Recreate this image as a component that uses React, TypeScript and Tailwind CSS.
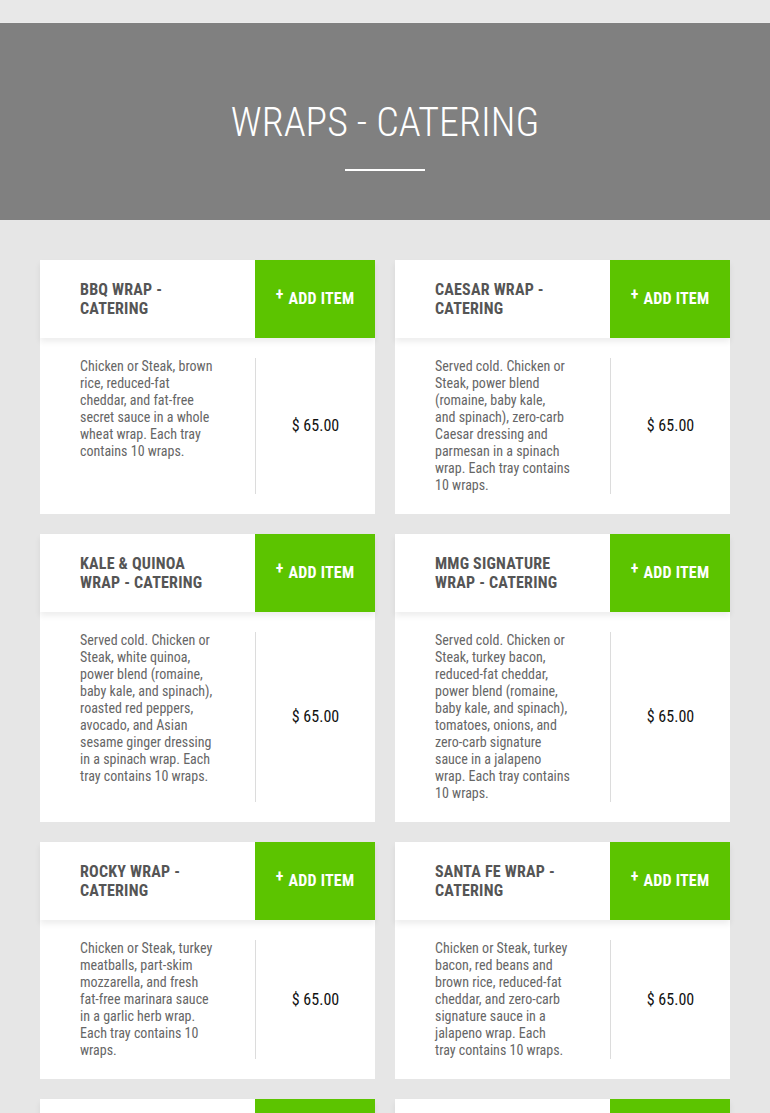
import React from "react";

type Item = { title: string; desc: string[]; price: string };

const items: Item[] = [
  {
    title: "BBQ Wrap - Catering",
    desc: [
      "Chicken or Steak, brown",
      "rice, reduced-fat",
      "cheddar, and fat-free",
      "secret sauce in a whole",
      "wheat wrap. Each tray",
      "contains 10 wraps.",
    ],
    price: "$ 65.00",
  },
  {
    title: "Caesar Wrap - Catering",
    desc: [
      "Served cold. Chicken or",
      "Steak, power blend",
      "(romaine, baby kale,",
      "and spinach), zero-carb",
      "Caesar dressing and",
      "parmesan in a spinach",
      "wrap. Each tray contains",
      "10 wraps.",
    ],
    price: "$ 65.00",
  },
  {
    title: "Kale & Quinoa Wrap - Catering",
    desc: [
      "Served cold. Chicken or",
      "Steak, white quinoa,",
      "power blend (romaine,",
      "baby kale, and spinach),",
      "roasted red peppers,",
      "avocado, and Asian",
      "sesame ginger dressing",
      "in a spinach wrap. Each",
      "tray contains 10 wraps.",
    ],
    price: "$ 65.00",
  },
  {
    title: "MMG Signature Wrap - Catering",
    desc: [
      "Served cold. Chicken or",
      "Steak, turkey bacon,",
      "reduced-fat cheddar,",
      "power blend (romaine,",
      "baby kale, and spinach),",
      "tomatoes, onions, and",
      "zero-carb signature",
      "sauce in a jalapeno",
      "wrap. Each tray contains",
      "10 wraps.",
    ],
    price: "$ 65.00",
  },
  {
    title: "Rocky Wrap - Catering",
    desc: [
      "Chicken or Steak, turkey",
      "meatballs, part-skim",
      "mozzarella, and fresh",
      "fat-free marinara sauce",
      "in a garlic herb wrap.",
      "Each tray contains 10",
      "wraps.",
    ],
    price: "$ 65.00",
  },
  {
    title: "Santa Fe Wrap - Catering",
    desc: [
      "Chicken or Steak, turkey",
      "bacon, red beans and",
      "brown rice, reduced-fat",
      "cheddar, and zero-carb",
      "signature sauce in a",
      "jalapeno wrap. Each",
      "tray contains 10 wraps.",
    ],
    price: "$ 65.00",
  },
  {
    title: "Southwest Wrap - Catering",
    desc: [
      "Chicken or Steak, black",
      "beans, brown rice,",
      "reduced-fat cheddar,",
      "and salsa in a whole",
      "wheat wrap. Each tray",
      "contains 10 wraps.",
    ],
    price: "$ 65.00",
  },
  {
    title: "Turkey Club Wrap - Catering",
    desc: [
      "Served cold. Turkey,",
      "turkey bacon, reduced-",
      "fat cheddar, tomatoes,",
      "and zero-carb signature",
      "sauce in a spinach wrap.",
      "Each tray contains 10",
      "wraps.",
    ],
    price: "$ 65.00",
  },
];

function Card({ item }: { item: Item }) {
  return (
    <div className="bg-white flex flex-col">
      <div className="flex h-[78px] relative z-10 shadow-[0_4px_6px_rgba(0,0,0,0.07)]">
        <div className="w-[215px] px-10 flex items-center font-bold text-[16px] leading-[19px] text-[#555] uppercase tracking-[0.2px]">
          {item.title}
        </div>
        <div className="w-[120px] bg-[#5cc400] flex items-center justify-center text-white font-bold text-[16px] leading-none tracking-[0.2px]">
          <span className="text-[16px] relative -top-[4px] mr-[5px]">+</span>
          ADD ITEM
        </div>
      </div>
      <div className="flex flex-1 py-5">
        <div className="w-[215px] pl-10 pr-8 text-[14px] leading-[17px] text-[#666]">
          {item.desc.map((l, i) => (
            <div key={i} className="whitespace-nowrap">
              {l}
            </div>
          ))}
        </div>
        <div className="w-[120px] border-l border-[#dcdcdc] flex items-center justify-center text-[16px] text-[#111]">
          {item.price}
        </div>
      </div>
    </div>
  );
}

export default function App() {
  return (
    <div className="min-h-screen bg-[#e6e6e6] font-['Roboto_Condensed',Roboto,sans-serif] [font-stretch:condensed]">
      <div className="h-[23px] bg-[#e8e8e8] border-b border-[#ebebeb]" />
      <div className="h-[197px] bg-[#808080] flex flex-col items-center">
        <h1 className="mt-[78px] text-white text-[40px] leading-[44px] font-light">
          WRAPS - CATERING
        </h1>
        <div className="mt-[24px] w-[80px] h-[2px] bg-white" />
      </div>
      <div className="px-10 pt-10 grid grid-cols-2 gap-5">
        {items.map((it, i) => (
          <Card key={i} item={it} />
        ))}
      </div>
    </div>
  );
}
